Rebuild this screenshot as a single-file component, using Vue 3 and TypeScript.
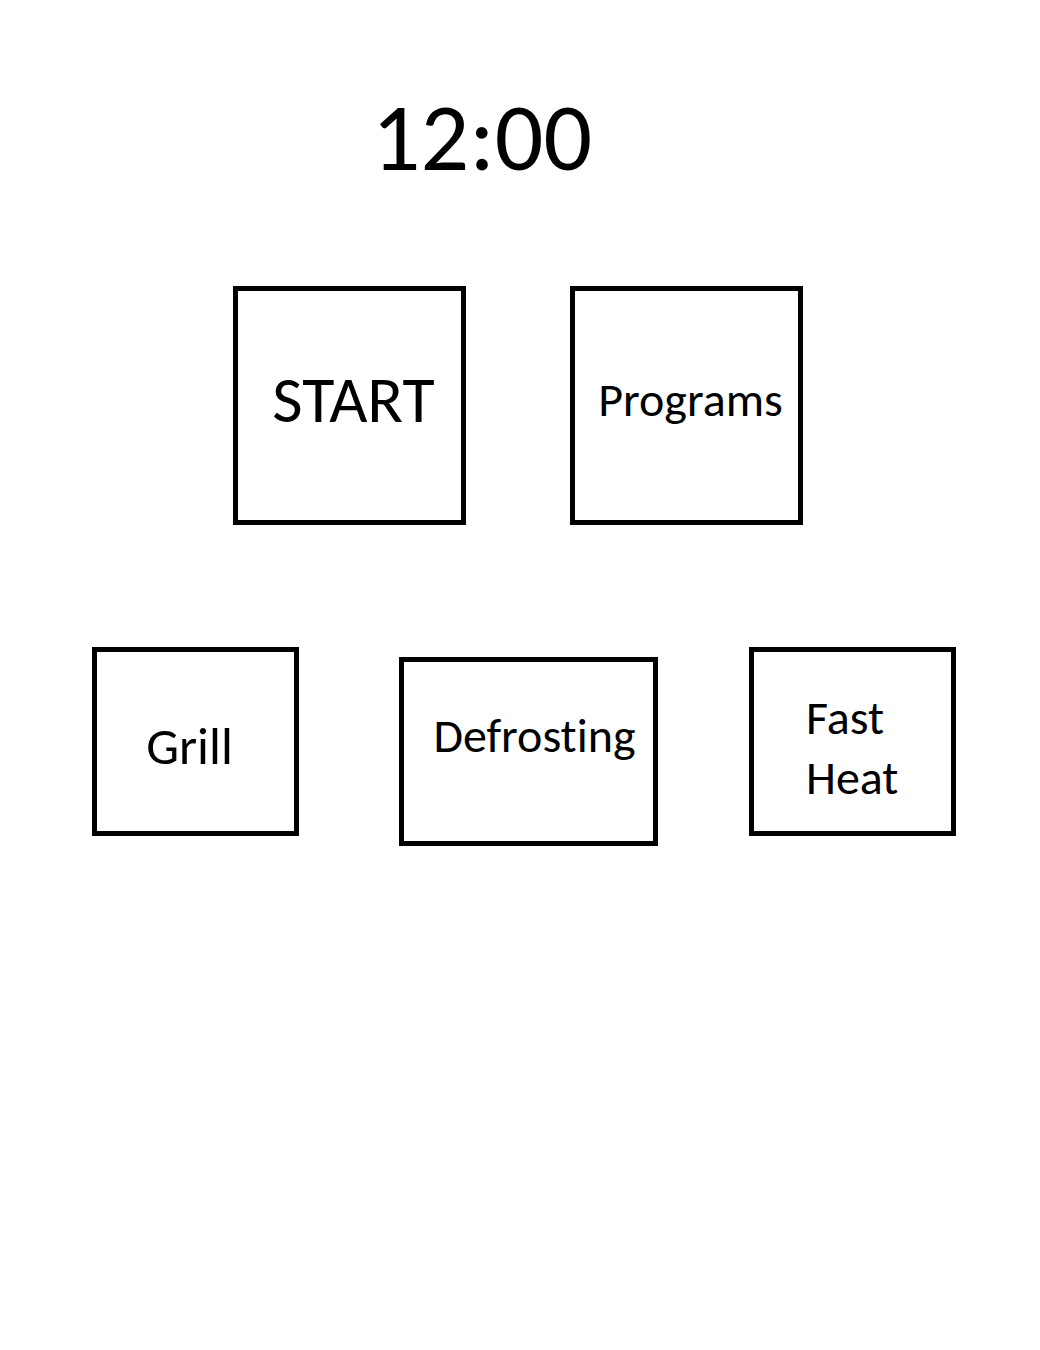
<script setup lang="ts">
interface PanelButton {
  id: string
  label: string
}

const primary: PanelButton[] = [
  { id: 'start', label: 'START' },
  { id: 'programs', label: 'Programs' },
]
const modes: PanelButton[] = [
  { id: 'grill', label: 'Grill' },
  { id: 'defrosting', label: 'Defrosting' },
  { id: 'fast-heat', label: 'Fast\nHeat' },
]
</script>

<template>
  <main class="panel">
    <time class="clock">12:00</time>
    <div class="row primary">
      <button v-for="b in primary" :key="b.id" type="button" :class="['key', b.id]">{{ b.label }}</button>
    </div>
    <div class="row modes">
      <button v-for="b in modes" :key="b.id" type="button" :class="['key', b.id]">{{ b.label }}</button>
    </div>
  </main>
</template>

<style>
body {
  margin: 0;
  background: #fff;
}
</style>

<style scoped>
.panel {
  display: flex;
  flex-direction: column;
  align-items: center;
  padding-top: 82px;
  color: #000;
  font-family: Carlito, Calibri, Lato, "Open Sans", sans-serif;
  font-variant-ligatures: none;
}
.clock {
  font-size: 96px;
  line-height: 112px;
  margin-right: 76px;
}
.row {
  display: flex;
}
.primary {
  gap: 104px;
  margin-top: 92px;
  margin-right: 4px;
}
.modes {
  align-items: flex-start;
  gap: 91px;
  margin-top: 122px;
  margin-left: 8px;
}
.key {
  box-sizing: border-box;
  margin: 0;
  padding: 0;
  border: 5px solid #000;
  border-radius: 0;
  background: #fff;
  color: inherit;
  font-family: inherit;
  font-variant-ligatures: inherit;
  font-size: 48px;
  line-height: 60px;
  text-align: center;
  white-space: pre-line;
  cursor: pointer;
}
.primary .key {
  width: 233px;
  height: 239px;
  padding: 0 0 12px 8px;
}
.modes .key {
  width: 207px;
  height: 189px;
}
.primary .start {
  font-size: 66px;
}
.modes .grill {
  padding: 8px 12px 0 0;
  font-size: 52px;
}
.modes .defrosting {
  width: 259px;
  margin: 10px 0 0 9px;
  padding: 0 0 32px 12px;
}
.modes .fast-heat {
  padding: 12px 0 0 52px;
  text-align: left;
}
</style>
